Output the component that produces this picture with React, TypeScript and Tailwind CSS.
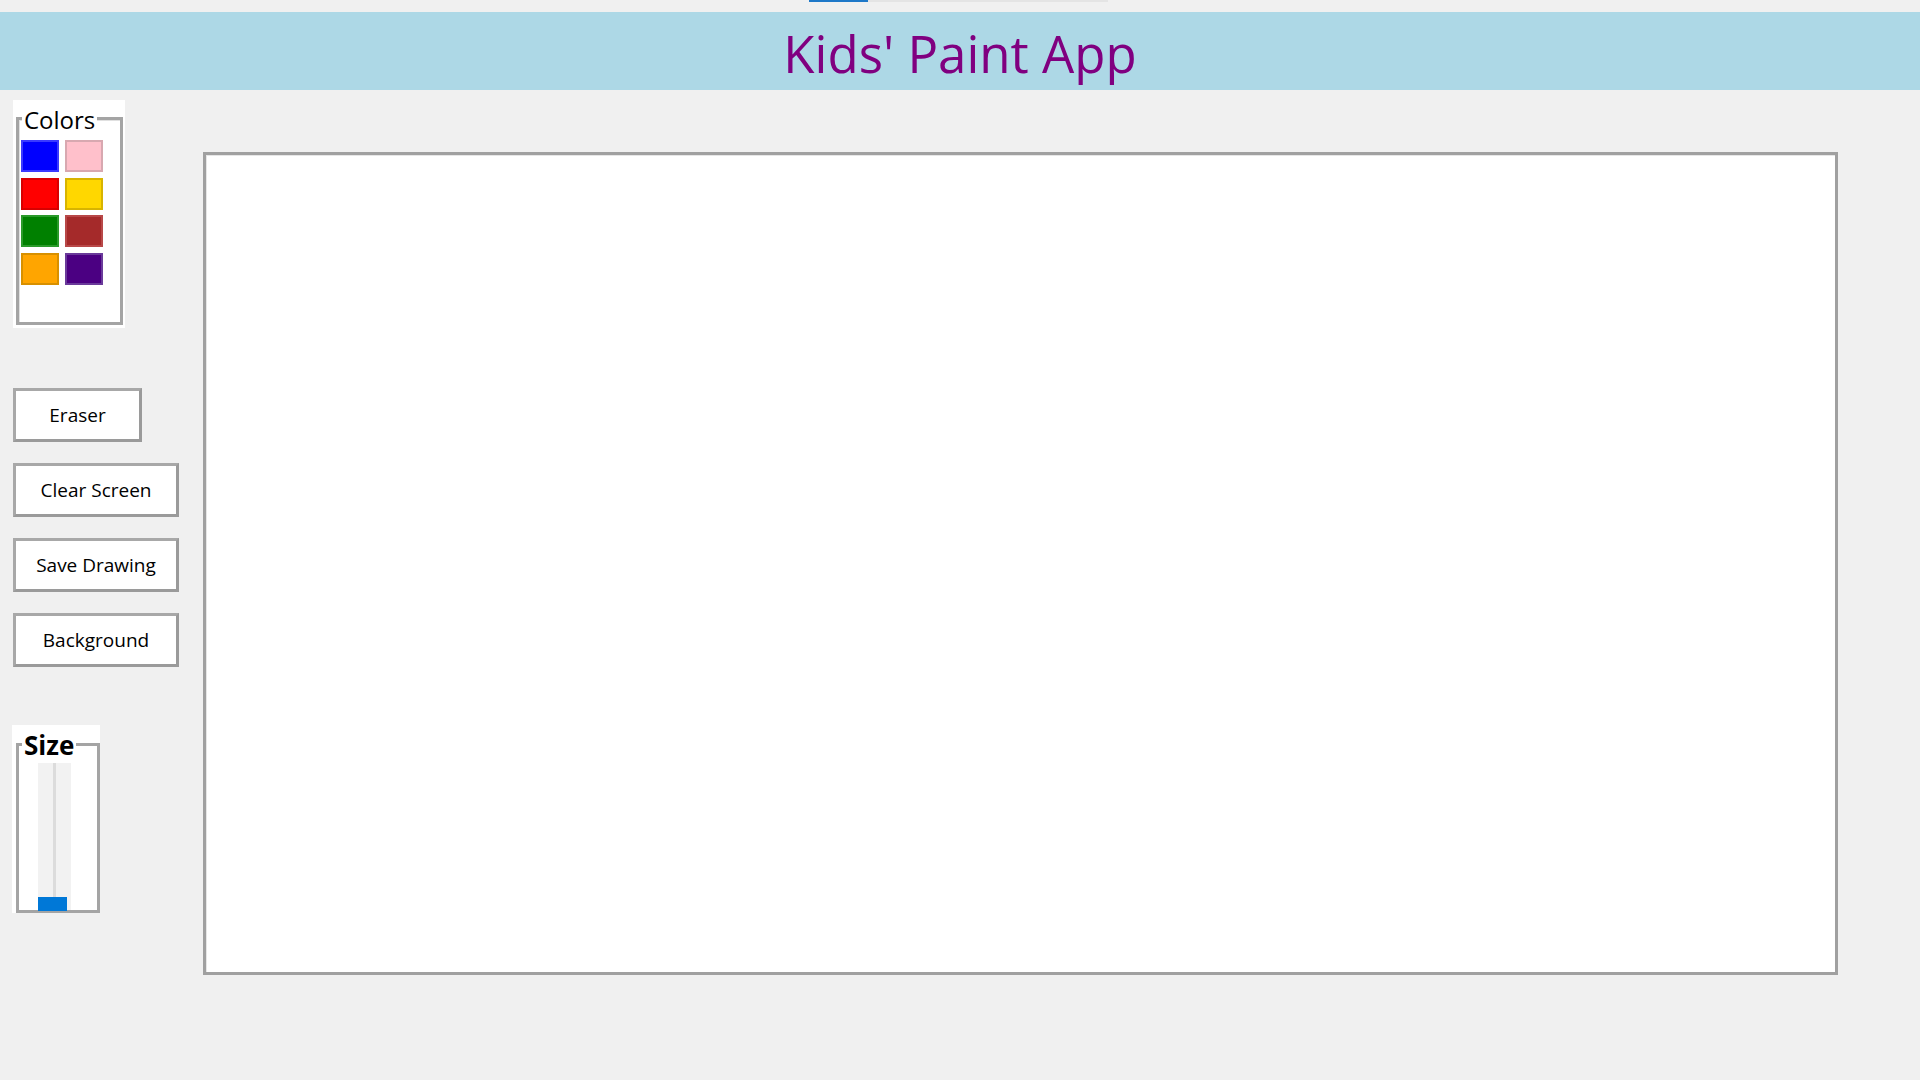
import React from "react";

const font = { fontFamily: '"Comic Sans MS", "Open Sans", "DejaVu Sans", sans-serif' };

const swatches = [
  ["bg-[#0000ff]", "border-[#3a3aff]"],
  ["bg-[#ffc0cb]", "border-[#d8a8b0]"],
  ["bg-[#ff0000]", "border-[#d80000]"],
  ["bg-[#ffd700]", "border-[#d8b400]"],
  ["bg-[#008000]", "border-[#2a9a2a]"],
  ["bg-[#a52a2a]", "border-[#b84848]"],
  ["bg-[#ffa500]", "border-[#d89000]"],
  ["bg-[#4b0082]", "border-[#6a3a9a]"],
];

function Btn({ label, w }: { label: string; w: string }) {
  return (
    <button
      className={`${w} h-[54px] bg-white border-[3px] border-t-[#a8a8a8] border-l-[#a8a8a8] border-r-[#9a9a9a] border-b-[#9a9a9a] text-[19px] text-black flex items-center justify-center`}
      style={font}
    >
      {label}
    </button>
  );
}

export default function App() {
  return (
    <div className="w-[1920px] h-[1080px] bg-[#f0f0f0] overflow-hidden" style={font}>
      <div className="h-[12px] flex">
        <div className="ml-[809px] w-[59px] h-[2px] bg-[#1e78c8]" />
        <div className="w-[240px] h-[2px] bg-[#e4e4e4]" />
      </div>
      <div className="h-[78px] bg-[#add8e6] flex items-center justify-center">
        <h1 className="text-[#800080] text-[51px] leading-none pt-[5px]" style={font}>
          Kids' Paint App
        </h1>
      </div>
      <div className="flex">
        <div className="w-[190px] pl-[13px] flex flex-col">
          <div className="relative mt-[10px] w-[112px] h-[228px] bg-white">
            <div className="absolute left-[3px] top-[17px] w-[107px] h-[208px] border-[3px] border-[#a4a4a4] shadow-[inset_1px_1px_0_#e0e0e0]" />
            <div className="absolute left-[9px] top-[6px] bg-white px-[2px] text-[24px] leading-[28px] text-black">
              Colors
            </div>
            <div className="relative pt-[40px] pl-[8px] grid grid-cols-[38px_38px] gap-x-[6px] gap-y-[5.5px]">
              {swatches.map(([bg, bd], i) => (
                <div key={i} className={`h-[32px] ${bg} border-2 ${bd}`} />
              ))}
            </div>
          </div>
          <div className="mt-[60px] flex flex-col gap-[21px]">
            <Btn label="Eraser" w="w-[129px]" />
            <Btn label="Clear Screen" w="w-[166px]" />
            <Btn label="Save Drawing" w="w-[166px]" />
            <Btn label="Background" w="w-[166px]" />
          </div>
          <div className="relative mt-[58px] -ml-[1px] w-[88px] h-[188px] bg-white">
            <div className="absolute left-[4px] top-[18px] w-[84px] h-[170px] border-[3px] border-[#a4a4a4]" />
            <div className="absolute left-[10px] top-[5px] bg-white px-[2px] text-[26px] leading-[30px] font-bold text-black">
              Size
            </div>
            <div className="absolute left-[26px] top-[38px] w-[33px] h-[147px] bg-[#f2f2f2] flex justify-center">
              <div className="w-[3px] h-full bg-[#dcdcdc]" />
            </div>
            <div className="absolute left-[26px] top-[172px] w-[29px] h-[14px] bg-[#0078d7]" />
          </div>
        </div>
        <div className="ml-[13px] mt-[62px] w-[1635px] h-[823px] bg-white border-[3px] border-[#a0a0a0] shadow-[inset_1px_1px_0_#e6e6e6]" />
      </div>
    </div>
  );
}
